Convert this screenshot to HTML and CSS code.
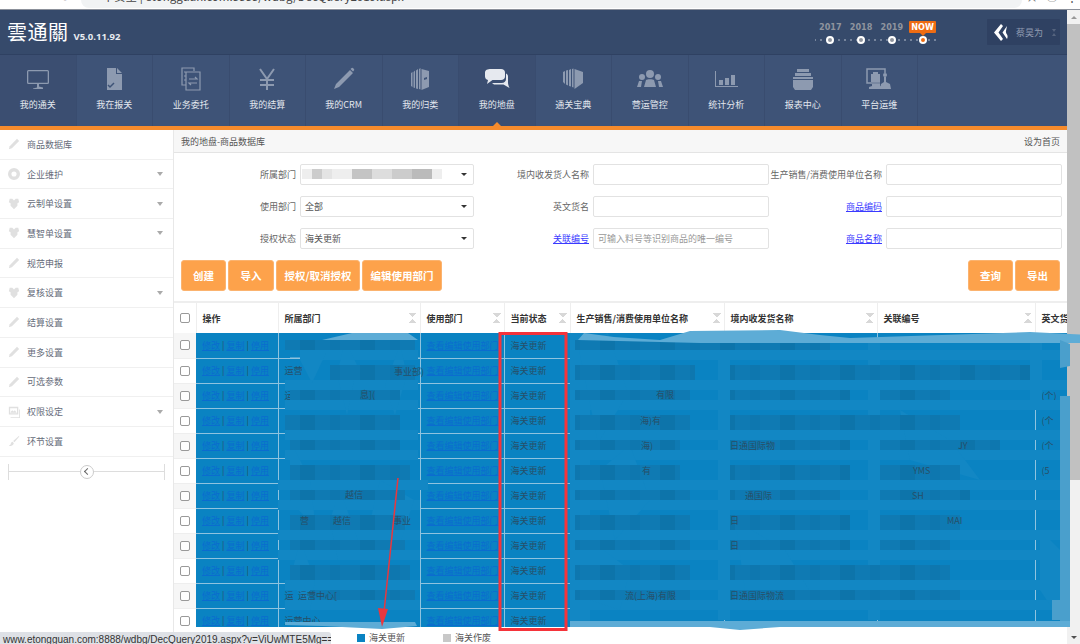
FILE: index.html
```html
<!DOCTYPE html>
<html lang="zh-CN">
<head>
  <meta charset="UTF-8">
  <title>商品数据库</title>
  <link rel="stylesheet" href="styles.css">
</head>
<body>
<svg class="defs" width="0" height="0">
  <defs>
    <symbol id="i-pencil" viewBox="0 0 14 14"><path d="M10.500 1l2.500 2.500-8.500 8.500L1 13l1-3.500z"/></symbol>
    <symbol id="i-ring" viewBox="0 0 14 14"><path fill-rule="evenodd" d="M7 0a7 7 0 1 0 0 14A7 7 0 0 0 7 0zm0 4a3 3 0 1 1 0 6 3 3 0 0 1 0-6z"/></symbol>
    <symbol id="i-box" viewBox="0 0 14 14"><path d="M2 1h3l2 2 2-2h3l1 4-2 1v3l-4 4-4-4V6L1 5z"/></symbol>
    <symbol id="i-image" viewBox="0 0 14 14"><path fill-rule="evenodd" d="M1 1h11v9H1zm1.500 1.500v6h8v-6zM3 7l2-2 1.500 1.500L8 5l2 2.500V8H3zM13 4h1v10H3v-1h10z"/></symbol>
    <symbol id="i-brush" viewBox="0 0 14 14"><path d="M13 1L6 7l1.500 1.500L13 2zM5.500 8C3.500 8 3.500 10 3 11l-2 1.500c2 .5 5 .5 5.800-2.800z"/></symbol>
  </defs>
</svg>

<!-- browser top edge -->
<div class="chrome">
  <span class="chrome-btns">← → ⟳</span>
  <div class="addr">▭ 不安全 | etongguan.com:8888/wdbg/DecQuery2019.aspx</div>
  <span class="chrome-end">☆ &nbsp; ◯ &nbsp; ⋮</span>
</div>

<div class="page">
  <div class="main">
    <!-- header -->
    <div class="top">
      <div class="logo">雲通關</div>
      <div class="ver">V5.0.11.92</div>
      <div class="years">
        <div class="year-labels">
          <span>2017</span><span>2018</span><span>2019</span><span class="now">NOW</span>
        </div>
        <div class="year-dots">
          <i></i><i></i><i></i><i class="on"></i>
        </div>
      </div>
      <div class="user">
        <svg width="15" height="19" viewBox="0 0 15 19"><path fill="#fff" d="M8 1L1 9.500 8 18l2-2-4.500-6.500L10 3zM14 3L9.500 9.500 14 16c.8-2 .8-3 0-4.500-1-1.500-1.500-3-.8-4.500z"/></svg>
        <span class="user-name">蔡昊为</span>
        <span class="updown"></span>
      </div>
    </div>

    <!-- main nav -->
    <ul class="nav">
      <li class="first">
        <svg width="24" height="24" viewBox="0 0 24 24"><path fill-rule="evenodd" d="M2.500 3h19A1.500 1.500 0 0 1 23 4.500v11a1.500 1.500 0 0 1-1.500 1.500H13v2.500l4 1V22H7v-.5l4-1V17H2.500A1.500 1.500 0 0 1 1 15.500v-11A1.500 1.500 0 0 1 2.500 3zm-.2 1.300v11.400h19.400V4.300z"/></svg>
        <span>我的通关</span>
      </li>
      <li>
        <svg width="24" height="24" viewBox="0 0 24 24"><path d="M5 1h9v6h6v16H5z M15 1l5 5h-5z"/><path fill="none" stroke="#3e5377" stroke-width="1.500" d="M6 18l2 2 4-4"/></svg>
        <span>我在报关</span>
      </li>
      <li>
        <svg width="24" height="24" viewBox="0 0 24 24"><path fill="none" stroke-width="1.200" d="M15 4V1H3v17h4M7 5h14v18H7zM10 12h8l-2-2M18 16h-8l2 2M5 5h2M5 9h2M5 13h2"/></svg>
        <span>业务委托</span>
      </li>
      <li>
        <svg width="24" height="24" viewBox="0 0 24 24"><path fill="none" stroke-width="2" d="M5 2l7 10 7-10M12 12v11M5 13h14M5 18h14"/></svg>
        <span>我的结算</span>
      </li>
      <li>
        <svg width="24" height="24" viewBox="0 0 24 24"><path d="M18 3l3 3L7 20l-5 2 2-5zM19 1.500c1-1 1.500-1 2.500 0s1 1.500 0 2.500l-.5.500L18.500 2z"/></svg>
        <span>我的CRM</span>
      </li>
      <li>
        <svg width="24" height="24" viewBox="0 0 24 24"><path d="M3 6l1.500-1v15L3 19zM5.500 5L7 3.500V21l-1.500-.5zM8 3.500L10 2v20l-2-.5zM11 2l1.500-1v21.500L11 22z"/><path fill-rule="evenodd" d="M13.500 2l7.500 2v16l-7.500 3zm2.500 9v2l3-1v-2z"/></svg>
        <span>我的归类</span>
      </li>
      <li class="active">
        <svg width="26" height="24" viewBox="0 0 26 24"><path fill="#e6e9ef" d="M7 2h10c2.500 0 4 1.200 4 3.500v4c0 2.300-1.500 3.500-4 3.500H8.500L3 17l1-4c-2-.5-3-2-3-3.500v-4C1 3 3.500 2 7 2z"/><path fill="#e6e9ef" d="M22 6.500c1.300.5 2 1.500 2 3v6c0 1.500.5 3.500 1.500 5.500l-6-3.500H10l-2-1.500h9.500c3 0 4.500-1.800 4.500-4z"/></svg>
        <span>我的地盘</span>
      </li>
      <li>
        <svg width="24" height="24" viewBox="0 0 24 24"><path d="M2 5l2-1v13l-2-2zM5 3.500L7 3v15.500l-2-1zM8 3l2-1v17.500l-2-.5zM11 2l1.500-.5v19L11 20z"/><path d="M13.500 2l8.500 3v11l-8.500 6z"/></svg>
        <span>通关宝典</span>
      </li>
      <li>
        <svg width="26" height="24" viewBox="0 0 26 24"><circle cx="13" cy="7" r="4"/><circle cx="5" cy="10" r="3"/><circle cx="21" cy="10" r="3"/><path d="M7 20l2-7c1-1 7-1 8 0l2 7zM0 20l2-6h3l-1 6zM26 20l-2-6h-3l1 6z"/></svg>
        <span>营运管控</span>
      </li>
      <li>
        <svg width="24" height="24" viewBox="0 0 24 24"><path d="M1 4h1v15h22v1H1zM5 13h4v5H5zM11 11h4v7h-4zM17 8h4v10h-4z"/></svg>
        <span>统计分析</span>
      </li>
      <li>
        <svg width="24" height="24" viewBox="0 0 24 24"><path d="M6 2h12v3H6zM4 6h16v3H4zM2 10h20v2H2zM2 13h20v7l-2 3H4l-2-3z"/><path fill="none" stroke="#3e5377" stroke-dasharray="1.500 1" d="M5 17h14"/></svg>
        <span>报表中心</span>
      </li>
      <li>
        <svg width="28" height="24" viewBox="0 0 28 24"><path fill="none" stroke-width="1.500" d="M15 16H2V2h18v4"/><path d="M6 7h9v8H6zM8 7V5h5v2M7 17h8v2l3 1v2H4v-2l3-1z"/><circle cx="20" cy="8" r="2"/><path d="M19 10h2v5l4 2 1 5H15l1-5 3-2z"/></svg>
        <span>平台运维</span>
      </li>
    </ul>
    <div class="accent"></div>

    <div class="body">
      <!-- side menu -->
      <ul class="side">
        <li><svg><use href="#i-pencil"/></svg><span>商品数据库</span></li>
        <li><svg><use href="#i-ring"/></svg><span>企业维护</span><i class="caret"></i></li>
        <li><svg><use href="#i-box"/></svg><span>云制单设置</span><i class="caret"></i></li>
        <li><svg><use href="#i-box"/></svg><span>慧智单设置</span><i class="caret"></i></li>
        <li><svg><use href="#i-pencil"/></svg><span>规范申报</span></li>
        <li><svg><use href="#i-box"/></svg><span>复核设置</span><i class="caret"></i></li>
        <li><svg><use href="#i-pencil"/></svg><span>结算设置</span></li>
        <li><svg><use href="#i-pencil"/></svg><span>更多设置</span></li>
        <li><svg><use href="#i-pencil"/></svg><span>可选参数</span></li>
        <li><svg><use href="#i-image"/></svg><span>权限设定</span><i class="caret"></i></li>
        <li><svg><use href="#i-brush"/></svg><span>环节设置</span></li>
        <li class="collapse"><b></b></li>
      </ul>

      <div class="content">
        <div class="crumbs">
          <span>我的地盘-商品数据库</span>
          <span>设为首页</span>
        </div>

        <div class="form">
          <label>所属部门</label>
          <div class="field select"><span class="blur"></span></div>
          <label>境内收发货人名称</label>
          <div class="field"></div>
          <label>生产销售/消费使用单位名称</label>
          <div class="field"></div>

          <label>使用部门</label>
          <div class="field select">全部</div>
          <label>英文货名</label>
          <div class="field"></div>
          <label><a href="#">商品编码</a></label>
          <div class="field"></div>

          <label>授权状态</label>
          <div class="field select">海关更新</div>
          <label><a href="#">关联编号</a></label>
          <div class="field hint">可输入料号等识别商品的唯一编号</div>
          <label><a href="#">商品名称</a></label>
          <div class="field"></div>
        </div>

        <div class="buttons">
          <button class="b-45">创建</button>
          <button class="b-46">导入</button>
          <button class="b-84">授权/取消授权</button>
          <button class="b-80">编辑使用部门</button>
          <span class="spacer"></span>
          <button class="b-45">查询</button>
          <button class="b-45">导出</button>
        </div>

        <div class="table-wrap">
          <table class="goods">
            <colgroup>
              <col class="c1"><col class="c2"><col class="c3"><col class="c4"><col class="c5"><col class="c6"><col class="c7"><col class="c8"><col class="c9">
            </colgroup>
            <thead>
              <tr>
                <th><i class="box"></i></th>
                <th>操作</th>
                <th class="sort">所属部门</th>
                <th class="sort">使用部门</th>
                <th class="sort">当前状态</th>
                <th class="sort">生产销售/消费使用单位名称</th>
                <th class="sort">境内收发货名称</th>
                <th class="sort">关联编号</th>
                <th>英文货名</th>
              </tr>
            </thead>
            <tbody>
              <tr><td><i class="box"></i></td><td class="ops"><a href="#">修改</a> | <a href="#">复制</a> | <a href="#">停用</a></td><td></td><td><a href="#">查看编辑使用部门</a></td><td>海关更新</td><td></td><td></td><td></td><td></td></tr>
              <tr><td><i class="box"></i></td><td class="ops"><a href="#">修改</a> | <a href="#">复制</a> | <a href="#">停用</a></td><td>运营</td><td><a href="#">查看编辑使用部门</a></td><td>海关更新</td><td></td><td></td><td></td><td></td></tr>
              <tr><td><i class="box"></i></td><td class="ops"><a href="#">修改</a> | <a href="#">复制</a> | <a href="#">停用</a></td><td>运</td><td><a href="#">查看编辑使用部门</a></td><td>海关更新</td><td>日</td><td></td><td></td><td>(个)</td></tr>
              <tr><td><i class="box"></i></td><td class="ops"><a href="#">修改</a> | <a href="#">复制</a> | <a href="#">停用</a></td><td></td><td><a href="#">查看编辑使用部门</a></td><td>海关更新</td><td></td><td></td><td></td><td>(个</td></tr>
              <tr><td><i class="box"></i></td><td class="ops"><a href="#">修改</a> | <a href="#">复制</a> | <a href="#">停用</a></td><td></td><td><a href="#">查看编辑使用部门</a></td><td>海关更新</td><td></td><td></td><td></td><td>(个</td></tr>
              <tr><td><i class="box"></i></td><td class="ops"><a href="#">修改</a> | <a href="#">复制</a> | <a href="#">停用</a></td><td></td><td><a href="#">查看编辑使用部门</a></td><td>海关更新</td><td></td><td></td><td></td><td>(5</td></tr>
              <tr><td><i class="box"></i></td><td class="ops"><a href="#">修改</a> | <a href="#">复制</a> | <a href="#">停用</a></td><td></td><td><a href="#">查看编辑使用部门</a></td><td>海关更新</td><td></td><td></td><td></td><td></td></tr>
              <tr><td><i class="box"></i></td><td class="ops"><a href="#">修改</a> | <a href="#">复制</a> | <a href="#">停用</a></td><td></td><td><a href="#">查看编辑使用部门</a></td><td>海关更新</td><td></td><td></td><td></td><td></td></tr>
              <tr><td><i class="box"></i></td><td class="ops"><a href="#">修改</a> | <a href="#">复制</a> | <a href="#">停用</a></td><td></td><td><a href="#">查看编辑使用部门</a></td><td>海关更新</td><td></td><td></td><td></td><td></td></tr>
              <tr><td><i class="box"></i></td><td class="ops"><a href="#">修改</a> | <a href="#">复制</a> | <a href="#">停用</a></td><td></td><td><a href="#">查看编辑使用部门</a></td><td>海关更新</td><td></td><td></td><td></td><td></td></tr>
              <tr><td><i class="box"></i></td><td class="ops"><a href="#">修改</a> | <a href="#">复制</a> | <a href="#">停用</a></td><td>运</td><td><a href="#">查看编辑使用部门</a></td><td>海关更新</td><td>日</td><td></td><td></td><td></td></tr>
              <tr><td><i class="box"></i></td><td class="ops"><a href="#">修改</a> | <a href="#">复制</a> | <a href="#">停用</a></td><td>运营中心</td><td><a href="#">查看编辑使用部门</a></td><td>海关更新</td><td>埃</td><td></td><td></td><td></td></tr>
            </tbody>
          </table>
        </div>

        <div class="legend">
          <span class="lg-item"><i class="sq-blue"></i>海关更新</span>
          <span class="lg-item"><i class="sq-grey"></i>海关作废</span>
        </div>
      </div>
    </div>
  </div>

  <!-- page scrollbar -->
  <div class="scroll">
    <span class="arr up"></span>
    <span class="thumb"></span>
    <span class="arr down"></span>
  </div>
</div>

<div class="status-url">www.etongguan.com:8888/wdbg/DecQuery2019.aspx?v=ViUwMTE5Mg==</div>

<!-- hand-drawn blur, red box and arrow lying over the screenshot -->
<svg class="marks" viewBox="0 0 1080 644">
  <defs>
    <pattern id="pixels" width="60" height="25" patternUnits="userSpaceOnUse">
      <rect width="60" height="25" fill="#0f7ab3"/>
      <rect width="15" height="25" fill="#0d74aa"/>
      <rect x="30" width="10" height="25" fill="#0e77af"/>
    </pattern>
  </defs>
  <!-- row lines left showing through -->
  <path class="m-line" d="M668 358h15M850 358h185M730 383h50M854 383h181M992 408h68M630 433h30M724 433h66M860 433h30M1002 433h58M655 458h41M962 458h98M692 483h23M973 483h62M745 508h15M1000 508h35M640 533h60M975 533h60M724 558h32M1010 558h25M290 358h10M400 358h20M290 408h12M290 433h10M295 533h20M400 508h20"/>
  <!-- light strips -->
  <path class="m-strip" d="M570 350h497v10H570zM570 380h497v10H570zM570 400h497v10H570zM570 430h497v10H570zM570 450h497v10H570zM570 480h497v10H570zM570 500h497v10H570zM570 530h497v10H570zM570 550h497v10H570zM570 580h497v10H570zM570 600h497v10H570z"/>
  <path class="m-strip" d="M570 333h20v294h-20zM718 340h12v280h-12zM868 340h12v280h-12zM1030 340h12v60h-12z"/>
  <path class="m-strip" d="M300 350h118v10H300zM285 380h133v10H285zM285 400h133v10H285zM285 430h133v10H285zM285 450h133v10H285zM278 480h150v10H278zM278 500h142v10H278zM278 530h142v10H278zM278 550h142v10H278zM285 580h135v10H285zM285 600h135v10H285z"/>
  <path class="m-strip" d="M300 360l16-17 10 10-14 30zM345 340l12 25-10 50-10-40zM400 345l-15 40 10 30 12-40zM290 440l20 40 6 50-26-30zM340 490l18 50-20 20-8-40zM380 480l-12 50 30 20 16-50zM300 540l15 40-5 30-20-30z"/>
  <path class="m-strip" d="M578 345l30-12 20 60-30 50zM600 470l30-25 20 55-35 40zM590 540l40 30-10 40-30-10zM735 520l50 30 30 50-70-10zM900 410l50 30 30 40-70-20zM1040 530l30 30-10 60-20-30z"/>
  <!-- dark blocks over the text -->
  <path class="m-dark" d="M285 340h130v10H285zM330 365h85v15H330zM290 390h110v10H290zM285 415h115v15H285zM290 440h110v10H290zM290 465h120v15H290zM290 490h115v10H290zM290 515h115v15H290zM290 540h115v10H290zM290 565h120v15H290zM310 590h105v10H310z"/>
  <path class="m-dark" d="M575 340h255v10H575zM730 365h300v15H730zM575 365h120v15H575zM575 390h115v10H575zM730 390h120v10H730zM880 390h70v10H880zM575 415h115v15H575zM730 415h230v15H730zM575 440h105v10H575zM730 440h120v10H730zM880 440h120v10H880zM575 465h105v15H575zM730 465h120v15H730zM880 465h80v15H880zM575 490h115v10H575zM730 490h110v10H730zM880 490h90v10H880zM575 515h115v15H575zM730 515h120v15H730zM880 515h80v15H880zM575 540h115v10H575zM730 540h120v10H730zM880 540h70v10H880zM575 565h115v15H575zM730 565h220v15H730zM575 590h115v10H575zM730 590h230v10H730z"/>
  <path class="m-edge" d="M322 340l30-7 56 0 10 7zM578 340l6-7 30 4 46 3 30-9 90-1 40 5 30 3 180-6 60 3v8H830l-130 0zM285 622h130l2 4-35 3-60-3-37-1zM570 621h500v6H780l-40 3-30-3H570z"/>
  <path class="m-side" d="M1060 396h10v225h-10zM1060 340l10 4v22l-10 2zM1052 600h15v20h-15z"/>
  <!-- fragments still readable -->
  <text class="m-text" x="394" y="375">事业部)</text>
  <text class="m-text" x="360" y="398">息](</text>
  <text class="m-text" x="345" y="498">越信</text>
  <text class="m-text" x="300" y="524">营</text>
  <text class="m-text" x="333" y="524">越信</text>
  <text class="m-text" x="393" y="524">事业</text>
  <text class="m-text" x="298" y="599">运营中心[</text>
  <text class="m-text" x="656" y="398">有限</text>
  <text class="m-text" x="640" y="424">海)有</text>
  <text class="m-text" x="641" y="449">海)</text>
  <text class="m-text" x="642" y="474">有</text>
  <text class="m-text" x="625" y="599">流(上海)有限</text>
  <text class="m-text" x="730" y="449">日通国际物</text>
  <text class="m-text" x="745" y="499">通国际</text>
  <text class="m-text" x="730" y="524">日</text>
  <text class="m-text" x="730" y="549">日</text>
  <text class="m-text" x="730" y="599">日通国际物流</text>
  <text class="m-text" x="958" y="449">JY</text>
  <text class="m-text" x="913" y="474">YMS</text>
  <text class="m-text" x="912" y="499">SH</text>
  <text class="m-text" x="947" y="524">MAI</text>
  <rect class="m-red" x="500" y="333.500" width="66" height="296"/>
  <path class="m-arrow" d="M398 478L384 612"/>
  <path class="m-head" d="M378 608l10 1-6 18z"/>
</svg>
</body>
</html>
```

FILE: styles.css
```css
* {
  margin: 0;
  padding: 0;
  box-sizing: border-box;
}
html, body {
  width: 1080px;
  height: 644px;
  overflow: hidden;
}
body {
  position: relative;
  font-family: "Noto Sans CJK SC", sans-serif;
  font-size: 9px;
  color: #555;
  background-color: #fff;
}
ul {
  list-style: none;
}
.defs {
  display: block;
  height: 0;
}

/* browser top edge */
.chrome {
  height: 10px;
  display: flex;
  align-items: flex-end;
  overflow: hidden;
  background-color: #fff;
  border-bottom: 1px solid #8b909a;
  color: #555;
}
.chrome-btns {
  width: 81px;
  padding-left: 12px;
  padding-bottom: 5px;
  font-size: 12px;
  word-spacing: 10px;
  white-space: nowrap;
}
.addr {
  width: 941px;
  height: 8px;
  display: flex;
  align-items: flex-end;
  padding-left: 8px;
  background-color: #f1f3f4;
  border-radius: 0 0 10px 10px;
  margin-bottom: 1px;
  font-size: 11.500px;
  line-height: 24px;
  color: #444;
  white-space: nowrap;
}
.chrome-end {
  padding-left: 4px;
  padding-bottom: 5px;
  font-size: 12px;
  white-space: nowrap;
}

/* layout */
.page {
  display: flex;
  height: 634px;
}
.main {
  width: 1067px;
  display: flex;
  flex-direction: column;
}
.scroll {
  width: 13px;
  display: flex;
  flex-direction: column;
  align-items: center;
  background-color: #f1f1f1;
}
.arr {
  height: 14px;
  width: 13px;
  display: flex;
  align-items: center;
  justify-content: center;
}
.arr::before {
  content: "";
  border-left: 3px solid transparent;
  border-right: 3px solid transparent;
}
.arr.up::before {
  border-bottom: 3px solid #999;
}
.arr.down {
  margin-top: auto;
}
.arr.down::before {
  border-top: 3px solid #505050;
}
.thumb {
  width: 13px;
  height: 456px;
  background-color: #c1c1c1;
}

/* header */
.top {
  height: 45px;
  display: flex;
  align-items: center;
  padding: 0 7px 0 7px;
  background-color: #364a6b;
  border-bottom: 1px solid #2f4162;
}
.logo {
  font-family: "Noto Sans CJK TC", sans-serif;
  font-size: 20px;
  line-height: 24px;
  color: #fff;
  letter-spacing: 0.500px;
}
.ver {
  margin: 9px 0 0 5px;
  font-family: "Open Sans", sans-serif;
  font-size: 9.500px;
  font-weight: 700;
  color: #e8ebf0;
}
.years {
  margin-left: auto;
  margin-right: 49px;
  width: 123px;
}
.year-labels, .year-dots {
  display: grid;
  grid-template-columns: repeat(4, 30.750px);
  justify-items: center;
  align-items: center;
}
.year-labels span {
  font-family: "DejaVu Sans Condensed", "DejaVu Sans", sans-serif;
  font-size: 9px;
  font-weight: 700;
  color: #8f949e;
}
.year-labels .now {
  position: relative;
  padding: 0 2px;
  line-height: 12px;
  background-color: #ee6c13;
  color: #fff;
  border-radius: 1px;
}
.now::after {
  content: "";
  position: absolute;
  left: 50%;
  bottom: -3px;
  margin-left: -3px;
  border-left: 3px solid transparent;
  border-right: 3px solid transparent;
  border-top: 3px solid #ee6c13;
}
.year-dots {
  margin-top: 3px;
  height: 8px;
  background-image: radial-gradient(circle, #9aa5b8 0.600px, transparent 0.900px);
  background-size: 6px 8px;
  background-position: 15px 0;
  background-repeat: repeat-x;
}
.year-dots i {
  width: 8px;
  height: 8px;
  border-radius: 50%;
  background-color: #8f949e;
  border: 2.500px solid #fff;
}
.year-dots i.on {
  background-color: #ee6c13;
}
.user {
  width: 73px;
  height: 26px;
  display: flex;
  align-items: center;
  padding-left: 6px;
  background-color: #2f4162;
  border-radius: 1px;
}
.user-name {
  margin-left: 8px;
  color: #8f9bb0;
  font-size: 9px;
}
.updown {
  margin-left: 9px;
  width: 0;
  height: 7px;
  border-left: 2px solid transparent;
  border-right: 2px solid transparent;
  border-top: 3px solid #55647e;
  border-bottom: 3px solid #55647e;
}

/* main nav */
.nav {
  height: 71px;
  display: flex;
  background-color: #3e5377;
}
.nav li {
  position: relative;
  width: 76.500px;
  display: flex;
  flex-direction: column;
  align-items: center;
  padding-top: 12px;
  border-right: 1px solid #394c6f;
  color: #e3e7ee;
}
.nav li svg {
  height: 24px;
  fill: #8d9ab0;
  stroke: #8d9ab0;
  stroke-width: 0;
}
.nav li span {
  margin-top: 7px;
  line-height: 14px;
}
.nav .first, .nav .active {
  background-color: #3b4e71;
}
.nav .active::after {
  content: "";
  position: absolute;
  left: 50%;
  bottom: 0;
  margin-left: -4px;
  border-left: 4px solid transparent;
  border-right: 4px solid transparent;
  border-bottom: 4px solid #f68b2c;
}
.accent {
  height: 4px;
  background-color: #f68b2c;
}
.body {
  flex: 1;
  display: flex;
  min-height: 0;
}

/* side menu */
.side {
  width: 174px;
  border-right: 1px solid #e8e8e8;
}
.side li {
  height: 29.700px;
  display: flex;
  align-items: center;
  padding-left: 8px;
  border-bottom: 1px solid #f0f0f0;
  color: #666c7a;
}
.side li svg {
  width: 12px;
  height: 12px;
  margin-right: 7px;
  fill: #e0e0e0;
}
.caret {
  margin-left: auto;
  margin-right: 10px;
  border-left: 3.500px solid transparent;
  border-right: 3.500px solid transparent;
  border-top: 4px solid #aaa;
}
.side .collapse {
  height: 16px;
  margin: 7px 8px 0 8px;
  padding: 0;
  position: relative;
  justify-content: center;
  border-bottom: 0;
  border-left: 1px solid #ddd;
  border-right: 1px solid #ddd;
  background: linear-gradient(#ddd, #ddd) center / 100% 1px no-repeat;
}
.collapse b {
  width: 14px;
  height: 14px;
  border: 1px solid #ccc;
  border-radius: 50%;
  background-color: #fff;
  display: flex;
  align-items: center;
  justify-content: center;
}
.collapse b::before {
  content: "";
  width: 4px;
  height: 4px;
  margin-left: 2px;
  border-left: 1px solid #666;
  border-bottom: 1px solid #666;
  transform: rotate(45deg);
}

/* content */
.content {
  flex: 1;
  min-width: 0;
  display: flex;
  flex-direction: column;
}
.crumbs {
  height: 23px;
  display: flex;
  align-items: center;
  justify-content: space-between;
  padding: 0 7px;
  background-color: #f7f7f7;
  border-bottom: 1px solid #e4e4e4;
  color: #555;
}
.form {
  display: grid;
  grid-template-columns: 126px 174px 119px 176px 117px 176px;
  grid-auto-rows: 21px;
  row-gap: 11px;
  margin-top: 11px;
}
.form label {
  padding-right: 4px;
  text-align: right;
  line-height: 21px;
  color: #666;
  white-space: nowrap;
}
.form a {
  color: #3a3aff;
}
.field {
  position: relative;
  padding-left: 4px;
  line-height: 19px;
  border: 1px solid #e2e2e2;
  border-radius: 2px;
  background-color: #fff;
  color: #555;
}
.hint {
  color: #999;
}
.select::after {
  content: "";
  position: absolute;
  right: 6px;
  top: 8px;
  border-left: 3px solid transparent;
  border-right: 3px solid transparent;
  border-top: 3px solid #333;
}
.blur {
  display: block;
  margin: 4px 0 0 -3px;
  width: 140px;
  height: 10px;
  background-image: linear-gradient(90deg, #eee 0 10px, #ccc 10px 20px, #e4e4e4 20px 30px, #eee 30px 50px, #c4c4c4 50px 70px, #ddd 70px 90px, #ccc 90px 110px, #bbb 110px 130px, #eee 130px 140px);
}
.buttons {
  display: flex;
  gap: 2px;
  margin-top: 11px;
  padding: 0 7px;
}
.spacer {
  flex: 1;
}
.buttons button {
  height: 31px;
  border: 1px solid #fbb36f;
  border-radius: 3px;
  background-color: #fda24b;
  color: #fff;
  font-family: inherit;
  font-size: 10.500px;
  font-weight: 700;
}
.b-45 { width: 45px; }
.b-46 { width: 46px; }
.b-84 { width: 84px; }
.b-80 { width: 80px; }

/* table */
.table-wrap {
  height: 326px;
  margin-top: 10px;
  overflow: hidden;
  border-top: 2px solid #eee;
}
.goods {
  width: 893px;
  table-layout: fixed;
  border-collapse: collapse;
}
.c1 { width: 22px; }
.c2 { width: 82px; }
.c3 { width: 142px; }
.c4 { width: 84px; }
.c5 { width: 66px; }
.c6 { width: 154px; }
.c7 { width: 153px; }
.c8 { width: 158px; }
.c9 { width: 32px; }
.goods th {
  height: 30px;
  padding: 0 6px;
  text-align: left;
  font-weight: 700;
  color: #333;
  white-space: nowrap;
  overflow: hidden;
  border-right: 1px solid #eee;
  background-color: #fff;
}
.goods th:first-child, .goods td:first-child {
  padding: 0 0 0 6px;
}
.sort {
  background-image: linear-gradient(45deg, transparent 50%, #d8d8d8 50%), linear-gradient(-45deg, transparent 50%, #d8d8d8 50%), linear-gradient(135deg, transparent 50%, #d8d8d8 50%), linear-gradient(-135deg, transparent 50%, #d8d8d8 50%);
  background-size: 4px 4px;
  background-repeat: no-repeat;
  background-position: right 7px top 10px, right 3px top 10px, right 7px top 16px, right 3px top 16px;
}
.goods td {
  height: 25px;
  padding: 0 6px;
  color: #274f68;
  white-space: nowrap;
  overflow: hidden;
  background-color: #0a83c2;
  border-right: 1px solid #8fc3df;
  border-bottom: 1px solid #8fc3df;
}
.goods td:first-child {
  background-color: #f6f6f6;
  border-right: 0;
  border-bottom: 1px solid #eee;
}
.goods tr:nth-child(even) td:first-child {
  background-color: #fff;
}
.goods td a {
  color: #0b6ccf;
  text-decoration: underline;
}
.box {
  display: block;
  width: 10px;
  height: 10px;
  border: 1px solid #999;
  border-radius: 2px;
  background-color: #fff;
}

/* legend */
.legend {
  display: flex;
  gap: 38px;
  padding-left: 183px;
  margin-top: 5px;
}
.lg-item {
  display: flex;
  align-items: center;
  gap: 4px;
  line-height: 12px;
  color: #555;
}
.lg-item i {
  width: 8px;
  height: 8px;
}
.sq-blue {
  background-color: #0a83c2;
}
.sq-grey {
  background-color: #c8c8c8;
}

/* link preview of the browser */
.status-url {
  position: absolute;
  left: 0;
  bottom: 0;
  width: 331px;
  height: 12px;
  padding-left: 3px;
  font-size: 10px;
  font-family: "Liberation Sans", sans-serif;
  line-height: 16px;
  white-space: nowrap;
  overflow: hidden;
  color: #333;
  background-color: #dee1e6;
  border-radius: 0 3px 0 0;
}

/* overlay */
.marks {
  position: absolute;
  left: 0;
  top: 0;
  width: 1080px;
  height: 644px;
  pointer-events: none;
}
.m-line {
  fill: none;
  stroke: #8fc3df;
  stroke-width: 1;
}
.m-strip {
  fill: #1287c4;
}
.m-dark {
  fill: url(#pixels);
}
.m-edge {
  fill: #5dacd6;
}
.m-side {
  fill: #4a9fcc;
}
.m-text {
  font-size: 9px;
  fill: #274f68;
}
.m-red {
  fill: none;
  stroke: #f5333a;
  stroke-width: 3;
}
.m-arrow {
  fill: none;
  stroke: #e8383f;
  stroke-width: 1.500;
}
.m-head {
  fill: #e8383f;
}
```
